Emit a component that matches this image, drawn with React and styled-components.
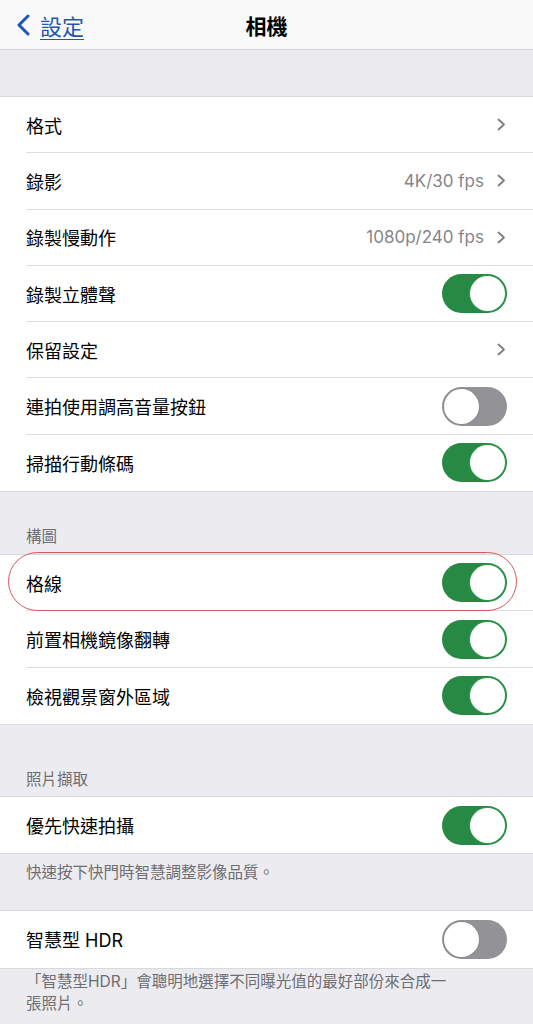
import React from 'react';
import styled, { createGlobalStyle } from 'styled-components';

const GlobalStyle = createGlobalStyle`
  html, body {
    margin: 0;
    padding: 0;
    background: #ebebf0;
    font-family: Inter, "Noto Sans CJK TC", "Noto Sans", sans-serif;
    -webkit-font-smoothing: antialiased;
  }
`;

const Page = styled.div`
  width: 533px;
  min-height: 1024px;
  background: #ebebf0;
`;

const NavBar = styled.div`
  height: 50px;
  box-sizing: border-box;
  background: #f9f9fa;
  border-bottom: 1px solid #d3d3d6;
  display: grid;
  grid-template-columns: 1fr auto 1fr;
  align-items: center;
`;

const BackButton = styled.a`
  display: flex;
  align-items: center;
  gap: 10px;
  padding-left: 16px;
  color: #1f56b3;
  font-size: 22px;
  text-decoration: underline;
  text-underline-offset: 4px;
  text-decoration-thickness: 1px;
`;

const NavTitle = styled.div`
  font-size: 21px;
  font-weight: 600;
  color: #000;
`;

const SectionHeader = styled.div`
  height: ${(p) => p.$height}px;
  box-sizing: border-box;
  display: flex;
  align-items: flex-end;
  padding: 0 26px ${(p) => p.$bottom || 0}px;
  font-size: 15.5px;
  line-height: 20px;
  color: #6d6d72;
`;

const Footer = styled.div`
  min-height: ${(p) => p.$height}px;
  box-sizing: border-box;
  padding: ${(p) => p.$top}px 26px 0;
  font-size: 15.5px;
  line-height: 22px;
  color: #6d6d72;
`;

const Group = styled.div`
  background: #fff;
  border-top: 1px solid #d9d9dd;
  border-bottom: 1px solid #d9d9dd;
`;

const Row = styled.div`
  position: relative;
  padding-left: 26px;
`;

const RowInner = styled.div`
  height: 56.3px;
  box-sizing: border-box;
  display: flex;
  align-items: center;
  padding-right: ${(p) => (p.$toggle ? 26 : 27)}px;
  border-bottom: 1px solid #dedee2;

  ${Row}:last-child & {
    border-bottom: none;
  }
`;

const Label = styled.span`
  flex: 1;
  font-size: 18px;
  color: #000;
`;

const Value = styled.span`
  font-size: 17px;
  color: #85858a;
  margin-right: 13px;
`;

const Track = styled.div`
  position: relative;
  width: 65px;
  height: 39px;
  box-sizing: border-box;
  border-radius: 20px;
  background: ${(p) => (p.$on ? '#268a45' : '#929297')};
`;

const Knob = styled.div`
  position: absolute;
  top: 2px;
  left: ${(p) => (p.$on ? '28px' : '2px')};
  width: 35px;
  height: 35px;
  border-radius: 50%;
  background: #fff;
  box-shadow: 0 0 0 1px ${(p) => (p.$on ? '#2f9a50' : '#8a8a8f')};
`;

const Highlight = styled.div`
  position: absolute;
  left: 8px;
  right: 16px;
  top: -3px;
  bottom: 0;
  border: 1.5px solid #d65a5d;
  border-radius: 999px;
  pointer-events: none;
`;

const BackChevron = () => (
  <svg width="14" height="22" viewBox="0 0 14 22">
    <polyline points="12,2 3,11 12,20" fill="none" stroke="#1f56b3" strokeWidth="3" strokeLinecap="round" strokeLinejoin="round" />
  </svg>
);

const Chevron = () => (
  <svg width="9" height="13" viewBox="0 0 9 13">
    <polyline points="1.5,1.5 7,6.5 1.5,11.5" fill="none" stroke="#7d7d82" strokeWidth="1.8" strokeLinecap="round" strokeLinejoin="round" />
  </svg>
);

const Toggle = ({ on }) => (
  <Track $on={on}>
    <Knob $on={on} />
  </Track>
);

const SettingRow = ({ label, value, toggle, on, marked }) => (
  <Row>
    {marked && <Highlight />}
    <RowInner $toggle={toggle}>
      <Label>{label}</Label>
      {value && <Value>{value}</Value>}
      {toggle ? <Toggle on={on} /> : <Chevron />}
    </RowInner>
  </Row>
);

const App = () => {
  return (
    <Page>
      <GlobalStyle />
      <NavBar>
        <BackButton>
          <BackChevron />
          設定
        </BackButton>
        <NavTitle>相機</NavTitle>
        <div />
      </NavBar>

      <SectionHeader $height={46} />
      <Group>
        <SettingRow label="格式" />
        <SettingRow label="錄影" value="4K/30 fps" />
        <SettingRow label="錄製慢動作" value="1080p/240 fps" />
        <SettingRow label="錄製立體聲" toggle on />
        <SettingRow label="保留設定" />
        <SettingRow label="連拍使用調高音量按鈕" toggle on={false} />
        <SettingRow label="掃描行動條碼" toggle on />
      </Group>

      <SectionHeader $height={62} $bottom={7}>構圖</SectionHeader>
      <Group>
        <SettingRow label="格線" toggle on marked />
        <SettingRow label="前置相機鏡像翻轉" toggle on />
        <SettingRow label="檢視觀景窗外區域" toggle on />
      </Group>

      <SectionHeader $height={71} $bottom={6}>照片擷取</SectionHeader>
      <Group>
        <SettingRow label="優先快速拍攝" toggle on />
      </Group>
      <Footer $height={56} $top={8}>快速按下快門時智慧調整影像品質。</Footer>
      <Group>
        <SettingRow label="智慧型 HDR" toggle on={false} />
      </Group>
      <Footer $height={60} $top={2}>
        「智慧型HDR」會聰明地選擇不同曝光值的最好部份來合成一
        <br />
        張照片。
      </Footer>
    </Page>
  );
};

export default App;
